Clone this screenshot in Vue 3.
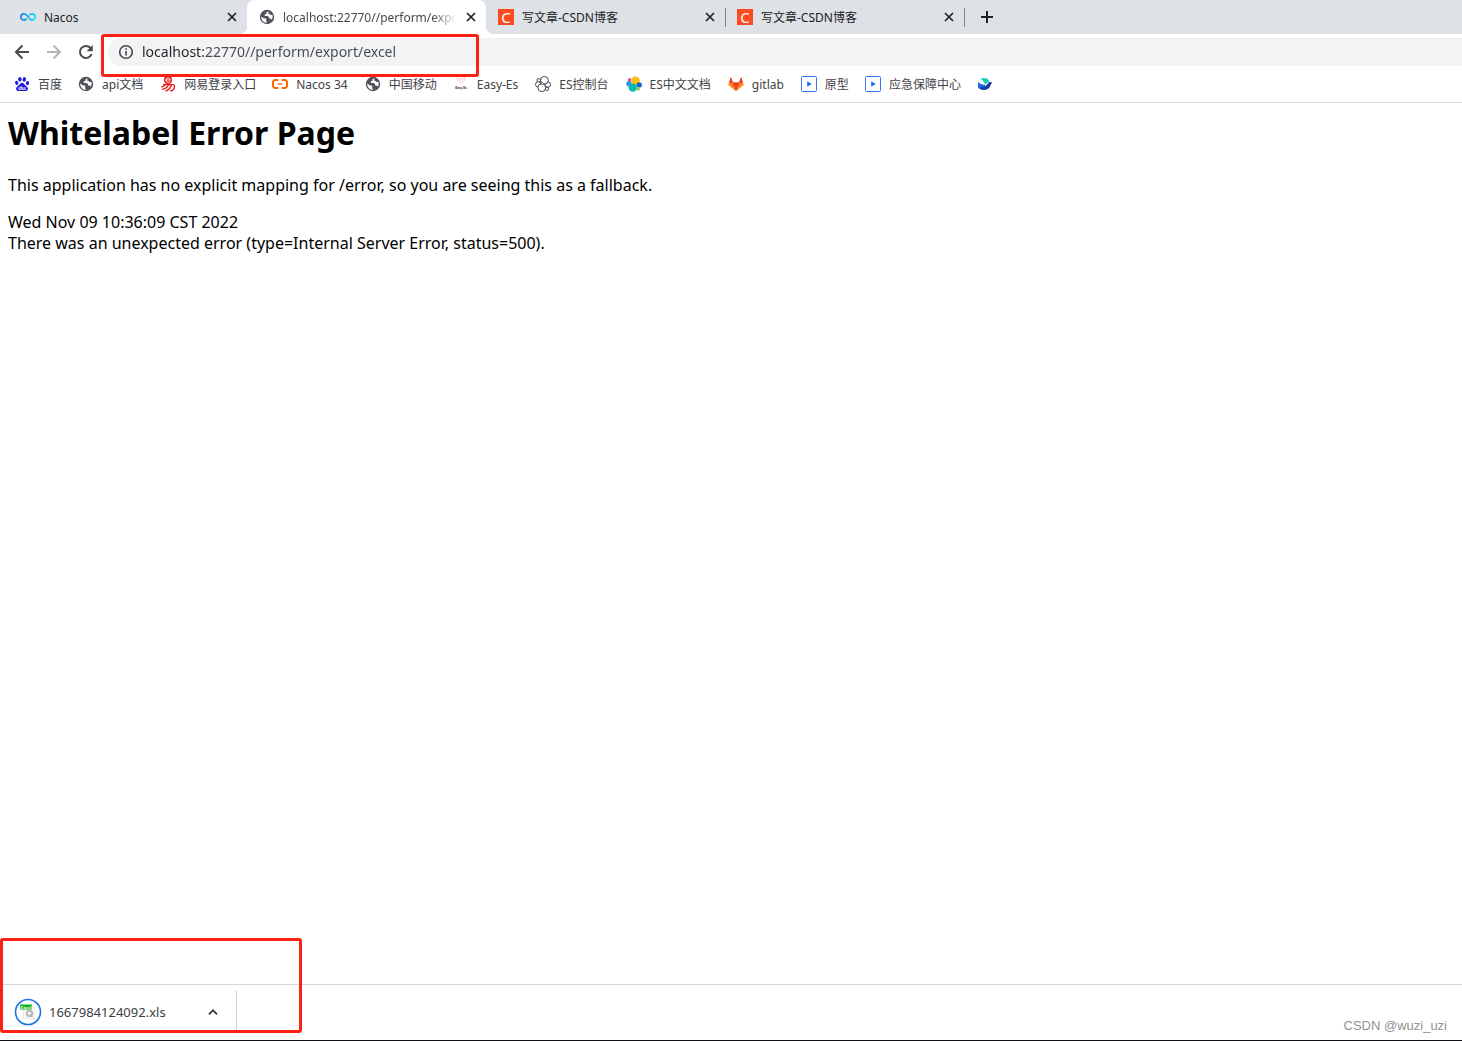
<script setup>
import { ref } from 'vue'

const address = ref('localhost:22770//perform/export/excel')

const tabs = [
  { id: 1, title: 'Nacos', icon: 'infinity' },
  { id: 2, title: 'localhost:22770//perform/export/excel', icon: 'globe', active: true },
  { id: 3, title: '写文章-CSDN博客', icon: 'csdn', divider: true },
  { id: 4, title: '写文章-CSDN博客', icon: 'csdn', divider: true }
]

const bookmarks = [
  { icon: 'baidu', label: '百度' },
  { icon: 'globe', label: 'api文档', latin: true },
  { icon: 'netease', label: '网易登录入口' },
  { icon: 'aliyun', label: 'Nacos 34', latin: true },
  { icon: 'globe', label: '中国移动' },
  { icon: 'easyes', label: 'Easy-Es', latin: true },
  { icon: 'cluster', label: 'ES控制台', latin: true },
  { icon: 'elastic', label: 'ES中文文档', latin: true },
  { icon: 'gitlab', label: 'gitlab', latin: true },
  { icon: 'play', label: '原型' },
  { icon: 'play', label: '应急保障中心' },
  { icon: 'whale', label: '' }
]
</script>

<template>
  <div class="browser">
    <svg class="sprite" aria-hidden="true">
      <symbol id="infinity" viewBox="0 0 16 16">
        <defs>
          <linearGradient id="nacos" x1="0" x2="1">
            <stop offset="0" stop-color="#1b7cf2" />
            <stop offset="1" stop-color="#10dcf0" />
          </linearGradient>
        </defs>
        <path d="M9.500 6.200C10.400 5.200 11.100 4.900 12 4.900A3.100 3.100 0 0 1 12 11.100C9 11.100 8.200 4.900 4 4.900A3.100 3.100 0 0 0 4 11.100C5 11.100 6 10.600 6.700 9.600" fill="none" stroke="url(#nacos)" stroke-width="1.700" />
      </symbol>
      <symbol id="globe" viewBox="0 0 16 16">
        <circle cx="8" cy="8" r="7.200" fill="#50545a" />
        <path d="M9.800 2.300 7.500 3.200v1.500l-1.700.7v1.600h3l1.300 1.300v1.300h1.600l1.200 1.100a5.600 5.600 0 0 0 .6-4.600l-1.900-.2-1.200-1.200H9.200V3.400z" fill="#fff" />
        <path d="M2.200 7.400l2.800 2.200h2.200v2.600l.9 1.500C4.600 13.800 2 11 2.200 7.400z" fill="#fff" />
      </symbol>
      <symbol id="csdn" viewBox="0 0 16 16">
        <path d="M0 0h16v16H0z" fill="#fc4b21" />
        <text x="8" y="13.500" text-anchor="middle" font-family="Noto Sans, sans-serif" font-size="15" fill="#fff">C</text>
      </symbol>
      <symbol id="baidu" viewBox="0 0 16 16">
        <g fill="#2319dc">
          <ellipse cx="5.900" cy="3.300" rx="1.700" ry="2.300" />
          <ellipse cx="10.300" cy="3.400" rx="1.700" ry="2.300" transform="rotate(10 10.300 3.400)" />
          <ellipse cx="2.700" cy="6.900" rx="1.600" ry="2.100" transform="rotate(-15 2.700 6.900)" />
          <ellipse cx="13.500" cy="7.100" rx="1.600" ry="2.100" transform="rotate(10 13.500 7.100)" />
          <path d="M8 6.700c1.500 0 2.200 1.500 3.300 2.500 1.500 1.300 3.100 2.300 2.500 4.200-.6 2-2.600 1.700-5.800 1.500-3.200.3-5.200.5-5.800-1.500-.6-1.900 1-2.900 2.500-4.200C5.800 8.200 6.500 6.700 8 6.700z" />
        </g>
        <text x="8" y="13.700" text-anchor="middle" font-family="Liberation Sans, sans-serif" font-size="6" font-weight="700" fill="#fff">du</text>
      </symbol>
      <symbol id="netease" viewBox="0 0 16 16">
        <circle cx="8" cy="4" r="4" fill="#ed1414" />
        <path d="M5.500 4h5M10.300 5.600Q8.500 7 6.600 5.900 5.200 4.300 6.600 2.400 8.300 1.300 9.800 2.600L10.200 4" fill="none" stroke="#fff" stroke-width=".9" />
        <g fill="none" stroke="#ed1414" stroke-width="1.300">
          <path d="M3 8.600h9.500q2.300 0 2 2.200-.3 3.200-3.200 4.200l-1-.8" />
          <path d="M5.500 8.500Q4 10.700 1.500 11M8.500 9Q6.500 13 2 13.300M11.500 9Q10 13.300 5.500 15.200" />
        </g>
      </symbol>
      <symbol id="aliyun" viewBox="0 0 16 16">
        <path d="M6.300 3.900H3.400Q1 3.900 1 6.300v3.200q0 2.400 2.400 2.400h2.900M9.700 3.900h2.900Q15 3.900 15 6.300v3.200q0 2.400-2.400 2.400H9.700" fill="none" stroke="#ff6a00" stroke-width="2" />
        <path d="M5.500 7.900h5" stroke="#ff6a00" stroke-width="1.300" />
      </symbol>
      <symbol id="easyes" viewBox="0 0 16 16">
        <path d="M4 1l2 1.800h4L12 1l-.7 4L8 7.500 4.700 5zM6 4h4" fill="none" stroke="#f6cfd3" stroke-width="1" />
        <text x="8" y="13" text-anchor="middle" font-family="Liberation Sans, sans-serif" font-size="3" font-weight="700" fill="#2b2326">Easy-Es</text>
      </symbol>
      <symbol id="cluster" viewBox="0 0 16 16">
        <g fill="#fff" stroke="#343741" stroke-width=".9">
          <circle cx="3.700" cy="4.400" r="1.800" />
          <circle cx="3.200" cy="8.400" r="2.700" />
          <circle cx="12.900" cy="8.600" r="2.700" />
          <circle cx="12" cy="12.800" r="1.700" />
          <circle cx="9.400" cy="4.300" r="3.900" />
          <circle cx="6.800" cy="11.700" r="3.900" />
        </g>
        <path d="M5.800 5.500 9.700 7.600l-2.800.9z" fill="#fff" stroke="#343741" stroke-width=".6" />
      </symbol>
      <symbol id="elastic" viewBox="0 0 16 16">
        <circle cx="9.500" cy="4.700" r="4.200" fill="#fdbd11" />
        <circle cx="3.600" cy="3.900" r="1.800" fill="#ee4b98" />
        <circle cx="3" cy="7.700" r="2.700" fill="#2794dc" />
        <circle cx="13.200" cy="8.900" r="2.700" fill="#1565c9" />
        <circle cx="12.200" cy="12.900" r="1.700" fill="#91c640" />
        <circle cx="6.800" cy="11.600" r="4.200" fill="#0bbab0" />
      </symbol>
      <symbol id="gitlab" viewBox="0 0 16 16">
        <path d="M2.800 1 5 6.500h6L13.200 1 15.700 9 8 15 .3 9z" fill="#fc6d26" />
        <path d="M5 6.500h6L8 15zM2.800 1 5 6.500H1.200zM13.200 1 11 6.500h3.800z" fill="#e24329" />
        <path d="M1.200 6.500.3 9 8 15zM14.800 6.500l.9 2.500L8 15z" fill="#fca326" />
      </symbol>
      <symbol id="play" viewBox="0 0 16 16">
        <rect x=".5" y=".5" width="15" height="15" rx="1" fill="#fff" stroke="#3576ec" />
        <path d="M6.200 5.300 10.800 8l-4.600 2.700z" fill="#2468e8" />
      </symbol>
      <symbol id="whale" viewBox="0 0 16 16">
        <path d="M3.500 2.200h6q2.200 1 2.700 3.600L8.300 8.300Q6.500 4.500 3.500 2.200z" fill="#08cfb5" />
        <path d="M1 6q3.500 3.300 7.200 2.500v5.500Q3.500 14.200 1 11.800z" fill="#176cf0" />
        <path d="M4.500 11q4 .3 6.400-3.500 1.500-2 4.100-1.200l-1.500 3.200q-1.800 4.300-6 4.400Q4.500 13.900 2.500 12.800z" fill="#173a9a" />
      </symbol>
    </svg>

    <header>
      <nav class="tab-strip" aria-label="Tabs">
        <div v-for="tab in tabs" :key="tab.id" class="tab" :class="{ active: tab.active, divider: tab.divider }">
          <button class="tab-main">
            <svg class="icon"><use :href="'#' + tab.icon" /></svg>
            <span class="tab-title">{{ tab.title }}</span>
          </button>
          <button class="close" aria-label="Close tab">
            <svg viewBox="0 0 10 10"><path d="M1 1l8 8M9 1 1 9" /></svg>
          </button>
        </div>
        <button class="new-tab" aria-label="New tab">
          <svg viewBox="0 0 12 12"><path d="M6 0v12M0 6h12" /></svg>
        </button>
      </nav>

      <div class="toolbar">
        <button class="nav-button" aria-label="Back">
          <svg class="icon" viewBox="0 0 16 16"><path d="M15 8H2M8.500 1.500 2 8l6.500 6.500" /></svg>
        </button>
        <button class="nav-button muted" aria-label="Forward">
          <svg class="icon" viewBox="0 0 16 16"><path d="M1 8h13M7.500 1.500 14 8l-6.500 6.500" /></svg>
        </button>
        <button class="nav-button" aria-label="Reload">
          <svg class="icon" viewBox="0 0 16 16">
            <path d="M13.600 10A6 6 0 1 1 12.500 4" />
            <path class="solid" d="M14.800 1v6.200H8.600z" />
          </svg>
        </button>
        <div class="address">
          <svg class="icon" viewBox="0 0 16 16">
            <circle cx="8" cy="8" r="6.300" />
            <path d="M8 7v4.500M8 4.200v1.600" />
          </svg>
          <input v-model="address" type="text" aria-label="Address" spellcheck="false" />
        </div>
        <div class="mark mark-address"></div>
      </div>

      <nav class="bookmarks" aria-label="Bookmarks">
        <a v-for="(item, index) in bookmarks" :key="index" href="#" :class="{ latin: item.latin }">
          <svg class="icon"><use :href="'#' + item.icon" /></svg>
          <span v-if="item.label">{{ item.label }}</span>
        </a>
      </nav>
    </header>

    <main>
      <h1>Whitelabel Error Page</h1>
      <p>This application has no explicit mapping for /error, so you are seeing this as a fallback.</p>
      <div>Wed Nov 09 10:36:09 CST 2022</div>
      <div>There was an unexpected error (type=Internal Server Error, status=500).</div>
    </main>

    <footer>
      <div class="download">
        <button class="file">
          <svg class="file-icon" viewBox="0 0 28 28" aria-hidden="true">
            <circle cx="14" cy="14" r="12.500" fill="#fff" stroke="#1a73e8" stroke-width="1.600" />
            <path d="M9.500 7h8l3.500 3.500V21H9.500z" fill="#f5f5f5" stroke="#dedede" stroke-width=".6" />
            <path d="M6 6.500h12v5H6z" fill="#12b31b" />
            <text x="12" y="10.700" text-anchor="middle" font-family="Liberation Serif, serif" font-size="5" font-weight="700" fill="#fff">Excel</text>
            <circle cx="15.500" cy="15.500" r="2.800" fill="none" stroke="#a9a9a9" stroke-width="1.400" />
            <path d="M16 16.500l2.500 2" stroke="#a9a9a9" stroke-width="1.400" />
          </svg>
          <span>1667984124092.xls</span>
        </button>
        <button class="expand" aria-label="Download options">
          <svg viewBox="0 0 10 6"><path d="M1 5.300 5 1.200l4 4.100" /></svg>
        </button>
      </div>
      <span class="credit">CSDN @wuzi_uzi</span>
      <div class="mark mark-download"></div>
    </footer>
  </div>
</template>

<style>
body {
  margin: 0;
  background: #fff;
}
</style>

<style scoped>
.browser {
  display: flex;
  flex-direction: column;
  min-height: 100vh;
  box-sizing: border-box;
  border-bottom: 1px solid #101014;
  overflow-x: hidden;
  font-family: "Noto Sans", "Noto Sans CJK SC", sans-serif;
  color: #000;
}

.sprite {
  position: absolute;
  width: 0;
  height: 0;
}

button {
  display: flex;
  align-items: center;
  padding: 0;
  border: 0;
  background: none;
  font: inherit;
  color: inherit;
}

.icon {
  flex: none;
  width: 16px;
  height: 16px;
}

.tab-strip {
  display: flex;
  height: 34px;
  padding-left: 8px;
  background: #dee1e6;
}

.tab {
  position: relative;
  display: flex;
  align-items: center;
  box-sizing: border-box;
  width: 239px;
  padding: 0 10px 0 12px;
  font-size: 12px;
  color: #202124;
}

.tab.active {
  background: #fff;
  border-radius: 8px 8px 0 0;
}

.tab.active::before,
.tab.active::after {
  content: "";
  position: absolute;
  bottom: 0;
  width: 8px;
  height: 8px;
}

.tab.active::before {
  right: 100%;
  background: radial-gradient(circle at 0 0, transparent 8px, #fff 8px);
}

.tab.active::after {
  left: 100%;
  background: radial-gradient(circle at 100% 0, transparent 8px, #fff 8px);
}

.tab.divider::after {
  content: "";
  position: absolute;
  right: -1px;
  top: 8px;
  width: 1px;
  height: 19px;
  background: #808387;
}

.tab-main {
  flex: 1;
  min-width: 0;
  gap: 8px;
}

.tab-title {
  flex: 1;
  overflow: hidden;
  white-space: nowrap;
  text-align: left;
}

.tab.active .tab-title {
  color: #45484c;
  mask-image: linear-gradient(90deg, #000 150px, transparent 174px);
}

.close {
  justify-content: center;
  width: 10px;
  margin: 0 0 0 10px;
}

.close svg {
  width: 10px;
  height: 10px;
  stroke: #202124;
  stroke-width: 1.7;
}

.new-tab {
  padding: 0 17px;
}

.new-tab svg {
  width: 12px;
  height: 12px;
  stroke: #202124;
  stroke-width: 2;
}

.toolbar {
  position: relative;
  display: flex;
  align-items: center;
  gap: 16px;
  height: 36px;
  padding-left: 14px;
}

.nav-button svg {
  fill: none;
  stroke: #494c50;
  stroke-width: 2;
}

.nav-button.muted svg {
  stroke: #b4b5b7;
}

.nav-button .solid {
  fill: #494c50;
  stroke: none;
}

.address {
  flex: 1;
  display: flex;
  align-items: center;
  gap: 8px;
  height: 28px;
  margin-left: -2px;
  padding-left: 10px;
  border-radius: 14px 0 0 14px;
  background: #f1f3f4;
}

.address svg {
  fill: none;
  stroke: #45484c;
  stroke-width: 1.6;
}

.address input {
  flex: 1;
  min-width: 0;
  box-sizing: border-box;
  height: 28px;
  padding: 0 0 2px;
  border: 0;
  outline: 0;
  font: 14px "Noto Sans", sans-serif;
  color: transparent;
  background: linear-gradient(90deg, #202124 61px, #46494d 61px);
  background-clip: text;
}

.mark {
  position: absolute;
  box-sizing: border-box;
  border: 3px solid #fd2115;
  border-radius: 3px;
  pointer-events: none;
}

.mark-address {
  left: 101px;
  top: 0;
  width: 378px;
  height: 43px;
}

.bookmarks {
  display: flex;
  align-items: center;
  gap: 16px;
  height: 28px;
  padding: 0 14px 4px;
  border-bottom: 1px solid #dadce0;
}

.bookmarks a {
  display: flex;
  align-items: center;
  gap: 8px;
  font-size: 12px;
  white-space: nowrap;
  color: #3f4246;
  text-decoration: none;
}

.bookmarks .latin {
  padding-right: 1px;
}

main {
  flex: 1;
  padding: 8px;
  font-size: 16px;
  line-height: 21px;
}

h1 {
  margin: 0 0 21px;
  font-size: 32px;
  line-height: 43px;
  font-weight: 700;
}

p {
  margin: 0 0 16px;
}

footer {
  position: relative;
  display: flex;
  align-items: center;
  justify-content: space-between;
  box-sizing: border-box;
  height: 56px;
  padding: 0 15px 2px 14px;
  border-top: 1px solid #d7d7d8;
}

.download {
  display: flex;
  align-items: center;
  justify-content: space-between;
  box-sizing: border-box;
  width: 223px;
  height: 42px;
  padding-right: 18px;
  border-right: 1px solid #cfcfd1;
  font-size: 13px;
  color: #3c4043;
}

.file {
  gap: 7px;
}

.file-icon {
  width: 28px;
  height: 28px;
}

.expand svg {
  width: 10px;
  height: 6px;
  fill: none;
  stroke: #303337;
  stroke-width: 1.7;
}

.credit {
  align-self: flex-end;
  margin-bottom: 3px;
  font: 13px/18px "Liberation Sans", sans-serif;
  color: #929292;
}

.mark-download {
  left: 0;
  bottom: 7px;
  width: 302px;
  height: 95px;
}
</style>
